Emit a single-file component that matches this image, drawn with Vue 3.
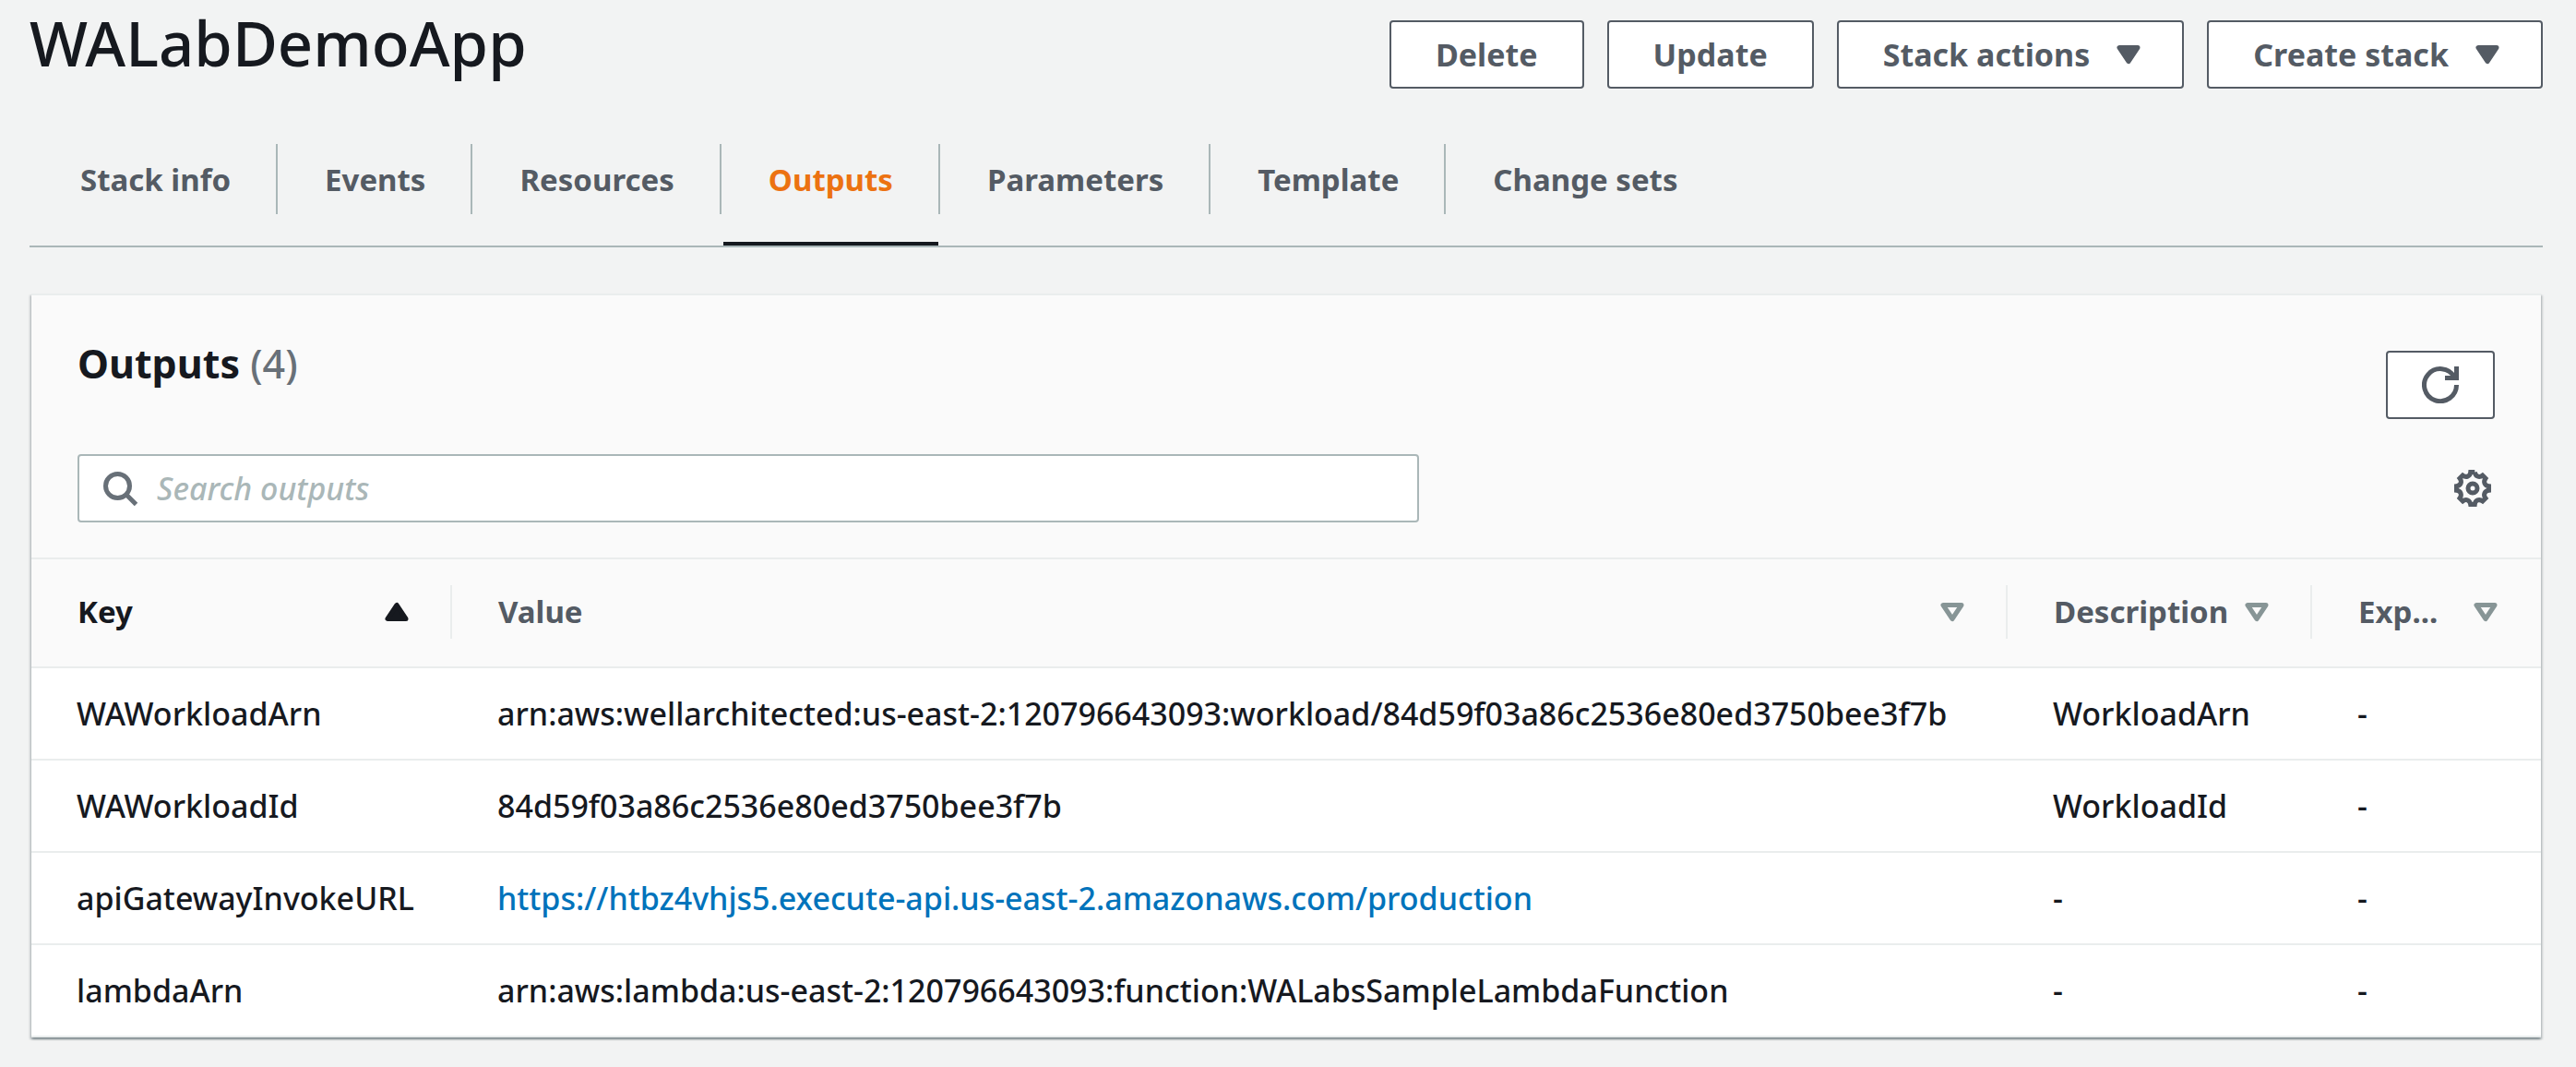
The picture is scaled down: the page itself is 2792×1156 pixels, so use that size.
<script setup>
import { ref } from 'vue'

const tabs = ['Stack info', 'Events', 'Resources', 'Outputs', 'Parameters', 'Template', 'Change sets']
const activeTab = ref('Outputs')
const query = ref('')

const columns = [
  { name: 'Key', cls: 'col-key', sorted: true },
  { name: 'Value', cls: 'col-value' },
  { name: 'Description', cls: 'col-description' },
  { name: 'Exp...', cls: 'col-export' },
]

const rows = [
  {
    key: 'WAWorkloadArn',
    value: 'arn:aws:wellarchitected:us-east-2:120796643093:workload/84d59f03a86c2536e80ed3750bee3f7b',
    description: 'WorkloadArn',
    exportName: '-',
  },
  { key: 'WAWorkloadId', value: '84d59f03a86c2536e80ed3750bee3f7b', description: 'WorkloadId', exportName: '-' },
  {
    key: 'apiGatewayInvokeURL',
    value: 'https://htbz4vhjs5.execute-api.us-east-2.amazonaws.com/production',
    link: true,
    description: '-',
    exportName: '-',
  },
  {
    key: 'lambdaArn',
    value: 'arn:aws:lambda:us-east-2:120796643093:function:WALabsSampleLambdaFunction',
    description: '-',
    exportName: '-',
  },
]

// Gear outline: one tooth and the valley after it, turned round the centre eight times.
const tooth = [[0.9, -7], [1.2, -5.2], [2.8, -4.4], [4.31, -5.59], [5.59, -4.31]]
const turn = ([x, y], step) => {
  const a = (step * Math.PI) / 4
  return `${(8 + x * Math.cos(a) - y * Math.sin(a)).toFixed(2)} ${(8 + x * Math.sin(a) + y * Math.cos(a)).toFixed(2)}`
}
let gear = `M${turn(tooth[0], 0)}`
for (let i = 0; i < 8; i++) {
  const [, a, b, c, d] = tooth.map((p) => turn(p, i))
  gear += `C${a} ${b} ${c}L${d}`
}
gear += 'Z'
</script>

<template>
  <main class="page">
    <header class="page-header">
      <h1>WALabDemoApp</h1>
      <div class="actions">
        <button type="button" class="btn">Delete</button>
        <button type="button" class="btn">Update</button>
        <button type="button" class="btn btn-menu">
          Stack actions
          <svg class="icon solid" viewBox="0 0 16 16" aria-hidden="true"><path d="M4 5h8l-4 6z" /></svg>
        </button>
        <button type="button" class="btn btn-menu">
          Create stack
          <svg class="icon solid" viewBox="0 0 16 16" aria-hidden="true"><path d="M4 5h8l-4 6z" /></svg>
        </button>
      </div>
    </header>

    <nav class="tabs" aria-label="Stack sections">
      <template v-for="(tab, i) in tabs" :key="tab">
        <span v-if="i" class="tab-separator"></span>
        <a href="#" class="tab" :class="{ active: tab === activeTab }" @click.prevent="activeTab = tab">{{ tab }}</a>
      </template>
    </nav>

    <section class="card">
      <div class="card-header">
        <div class="title-row">
          <h2>Outputs <span class="count">(4)</span></h2>
          <button type="button" class="btn btn-refresh" aria-label="Refresh">
            <svg class="icon" viewBox="0 0 16 16" aria-hidden="true">
              <path d="M10 5h5V0" />
              <path d="M15 8a7 7 0 1 1-.9-3.4" />
            </svg>
          </button>
        </div>
        <div class="filter-row">
          <label class="search">
            <svg class="icon" viewBox="0 0 16 16" aria-hidden="true">
              <circle cx="7" cy="7" r="5.2" />
              <path d="M10.7 10.7l4.3 4.3" />
            </svg>
            <input v-model="query" type="text" placeholder="Search outputs" aria-label="Search outputs" />
          </label>
          <button type="button" class="btn-gear" aria-label="Preferences">
            <svg class="icon" viewBox="0 0 16 16" aria-hidden="true">
              <path :d="gear" />
              <circle cx="8" cy="8" r="2" />
            </svg>
          </button>
        </div>
      </div>

      <table>
        <thead>
          <tr>
            <th v-for="col in columns" :key="col.name" scope="col" :class="[col.cls, { sorted: col.sorted }]">
              <div class="head-cell">
                <span>{{ col.name }}</span>
                <svg v-if="col.sorted" class="icon solid" viewBox="0 0 16 16" aria-hidden="true"><path d="M4 11h8l-4-6z" /></svg>
                <svg v-else class="icon hollow" viewBox="0 0 16 16" aria-hidden="true"><path d="M4 5h8l-4 6z" /></svg>
              </div>
            </th>
          </tr>
        </thead>
        <tbody>
          <tr v-for="row in rows" :key="row.key">
            <td>{{ row.key }}</td>
            <td>
              <a v-if="row.link" :href="row.value">{{ row.value }}</a>
              <template v-else>{{ row.value }}</template>
            </td>
            <td>{{ row.description }}</td>
            <td>{{ row.exportName }}</td>
          </tr>
        </tbody>
      </table>
    </section>
  </main>
</template>

<style>
body {
  margin: 0;
  background: #f2f3f3;
}
</style>

<style scoped>
.page {
  padding: 0 36px 30px 32px;
  background: #f2f3f3;
  color: #16191f;
  font-family: 'Noto Sans', 'Open Sans', sans-serif;
  font-size: 34px;
  line-height: 44px;
}

.page *,
.page {
  box-sizing: border-box;
}

.page-header {
  display: flex;
  justify-content: space-between;
  align-items: flex-start;
}

h1 {
  margin: 0;
  font-size: 67px;
  font-weight: 500;
  line-height: 92px;
}

.actions {
  display: flex;
  gap: 25px;
  margin-top: 22px;
}

.btn {
  display: flex;
  align-items: center;
  justify-content: center;
  height: 74px;
  padding: 0 48px;
  border: 2px solid #545b64;
  border-radius: 4px;
  background: #fff;
  color: #545b64;
  font: inherit;
  font-weight: 700;
  white-space: nowrap;
}

.btn-menu {
  gap: 22px;
  padding-right: 38px;
}

.icon {
  display: block;
  flex: none;
  width: 40px;
  height: 40px;
  fill: none;
  stroke: currentColor;
  stroke-width: 2;
}

.solid {
  fill: currentColor;
  stroke-linejoin: round;
}

.hollow {
  color: #879596;
  stroke-linejoin: round;
}

.tabs {
  display: flex;
  align-items: flex-start;
  margin-top: 60px;
  padding-left: 6px;
  border-bottom: 2px solid #aab7b8;
}

.tab {
  padding: 17px 49px 45px;
  border-bottom: 4px solid transparent;
  color: #545b64;
  font-size: 33px;
  font-weight: 700;
  text-decoration: none;
  white-space: nowrap;
}

.tab.active {
  border-bottom-color: #16191f;
  color: #ec7211;
}

.tab-separator {
  width: 2px;
  height: 76px;
  margin-right: 2px;
  background: #aab7b8;
}

.card {
  margin: 50px 2px 0;
  border-top: 2px solid #eaeded;
  background: #fff;
  box-shadow:
    0 2px 2px rgba(0, 28, 36, 0.3),
    2px 2px 2px rgba(0, 28, 36, 0.15),
    -2px 2px 2px rgba(0, 28, 36, 0.15);
}

.card-header {
  padding: 48px 50px 38px;
  border-bottom: 2px solid #eaeded;
  background: #fafafa;
}

.title-row,
.filter-row {
  display: flex;
  justify-content: space-between;
  align-items: center;
}

.title-row {
  align-items: flex-start;
}

h2 {
  margin: 0;
  font-size: 43px;
  font-weight: 700;
  line-height: 52px;
}

.count {
  color: #687078;
  font-weight: 500;
}

.btn-refresh {
  width: 118px;
  margin-top: 12px;
  padding: 0;
}

.filter-row {
  margin-top: 38px;
  padding-right: 4px;
}

.search {
  display: flex;
  align-items: center;
  gap: 20px;
  width: 55.6%;
  height: 74px;
  padding: 0 24px;
  border: 2px solid #aab7b8;
  border-radius: 4px;
  background: #fff;
  color: #687078;
}

.search input {
  flex: 1;
  min-width: 0;
  padding: 0;
  border: 0;
  outline: 0;
  background: none;
  color: #16191f;
  font: inherit;
}

.search input::placeholder {
  color: #aab7b8;
  font-style: italic;
  font-weight: 500;
  opacity: 1;
}

.btn-gear {
  padding: 0;
  border: 0;
  background: none;
  color: #545b64;
}

table {
  width: 100%;
  border-collapse: separate;
  border-spacing: 0;
  table-layout: fixed;
}

.col-key {
  width: 456px;
}

.col-description {
  width: 330px;
}

.col-export {
  width: 248px;
}

th {
  padding: 28px 0 30px;
  border-bottom: 2px solid #eaeded;
  background: #fafafa;
  color: #545b64;
  font-size: 33px;
  font-weight: 700;
  text-align: left;
}

th.sorted {
  color: #16191f;
}

.head-cell {
  display: flex;
  align-items: center;
  justify-content: space-between;
  height: 58px;
  padding: 0 38px 0 50px;
  border-right: 2px solid #eaeded;
}

.col-export .head-cell {
  border-right-color: transparent;
}

td {
  padding: 27px 0 27px 49px;
  border-bottom: 2px solid #eaeded;
  font-weight: 500;
  white-space: nowrap;
}

td a {
  color: #0073bb;
  text-decoration: none;
}
</style>
